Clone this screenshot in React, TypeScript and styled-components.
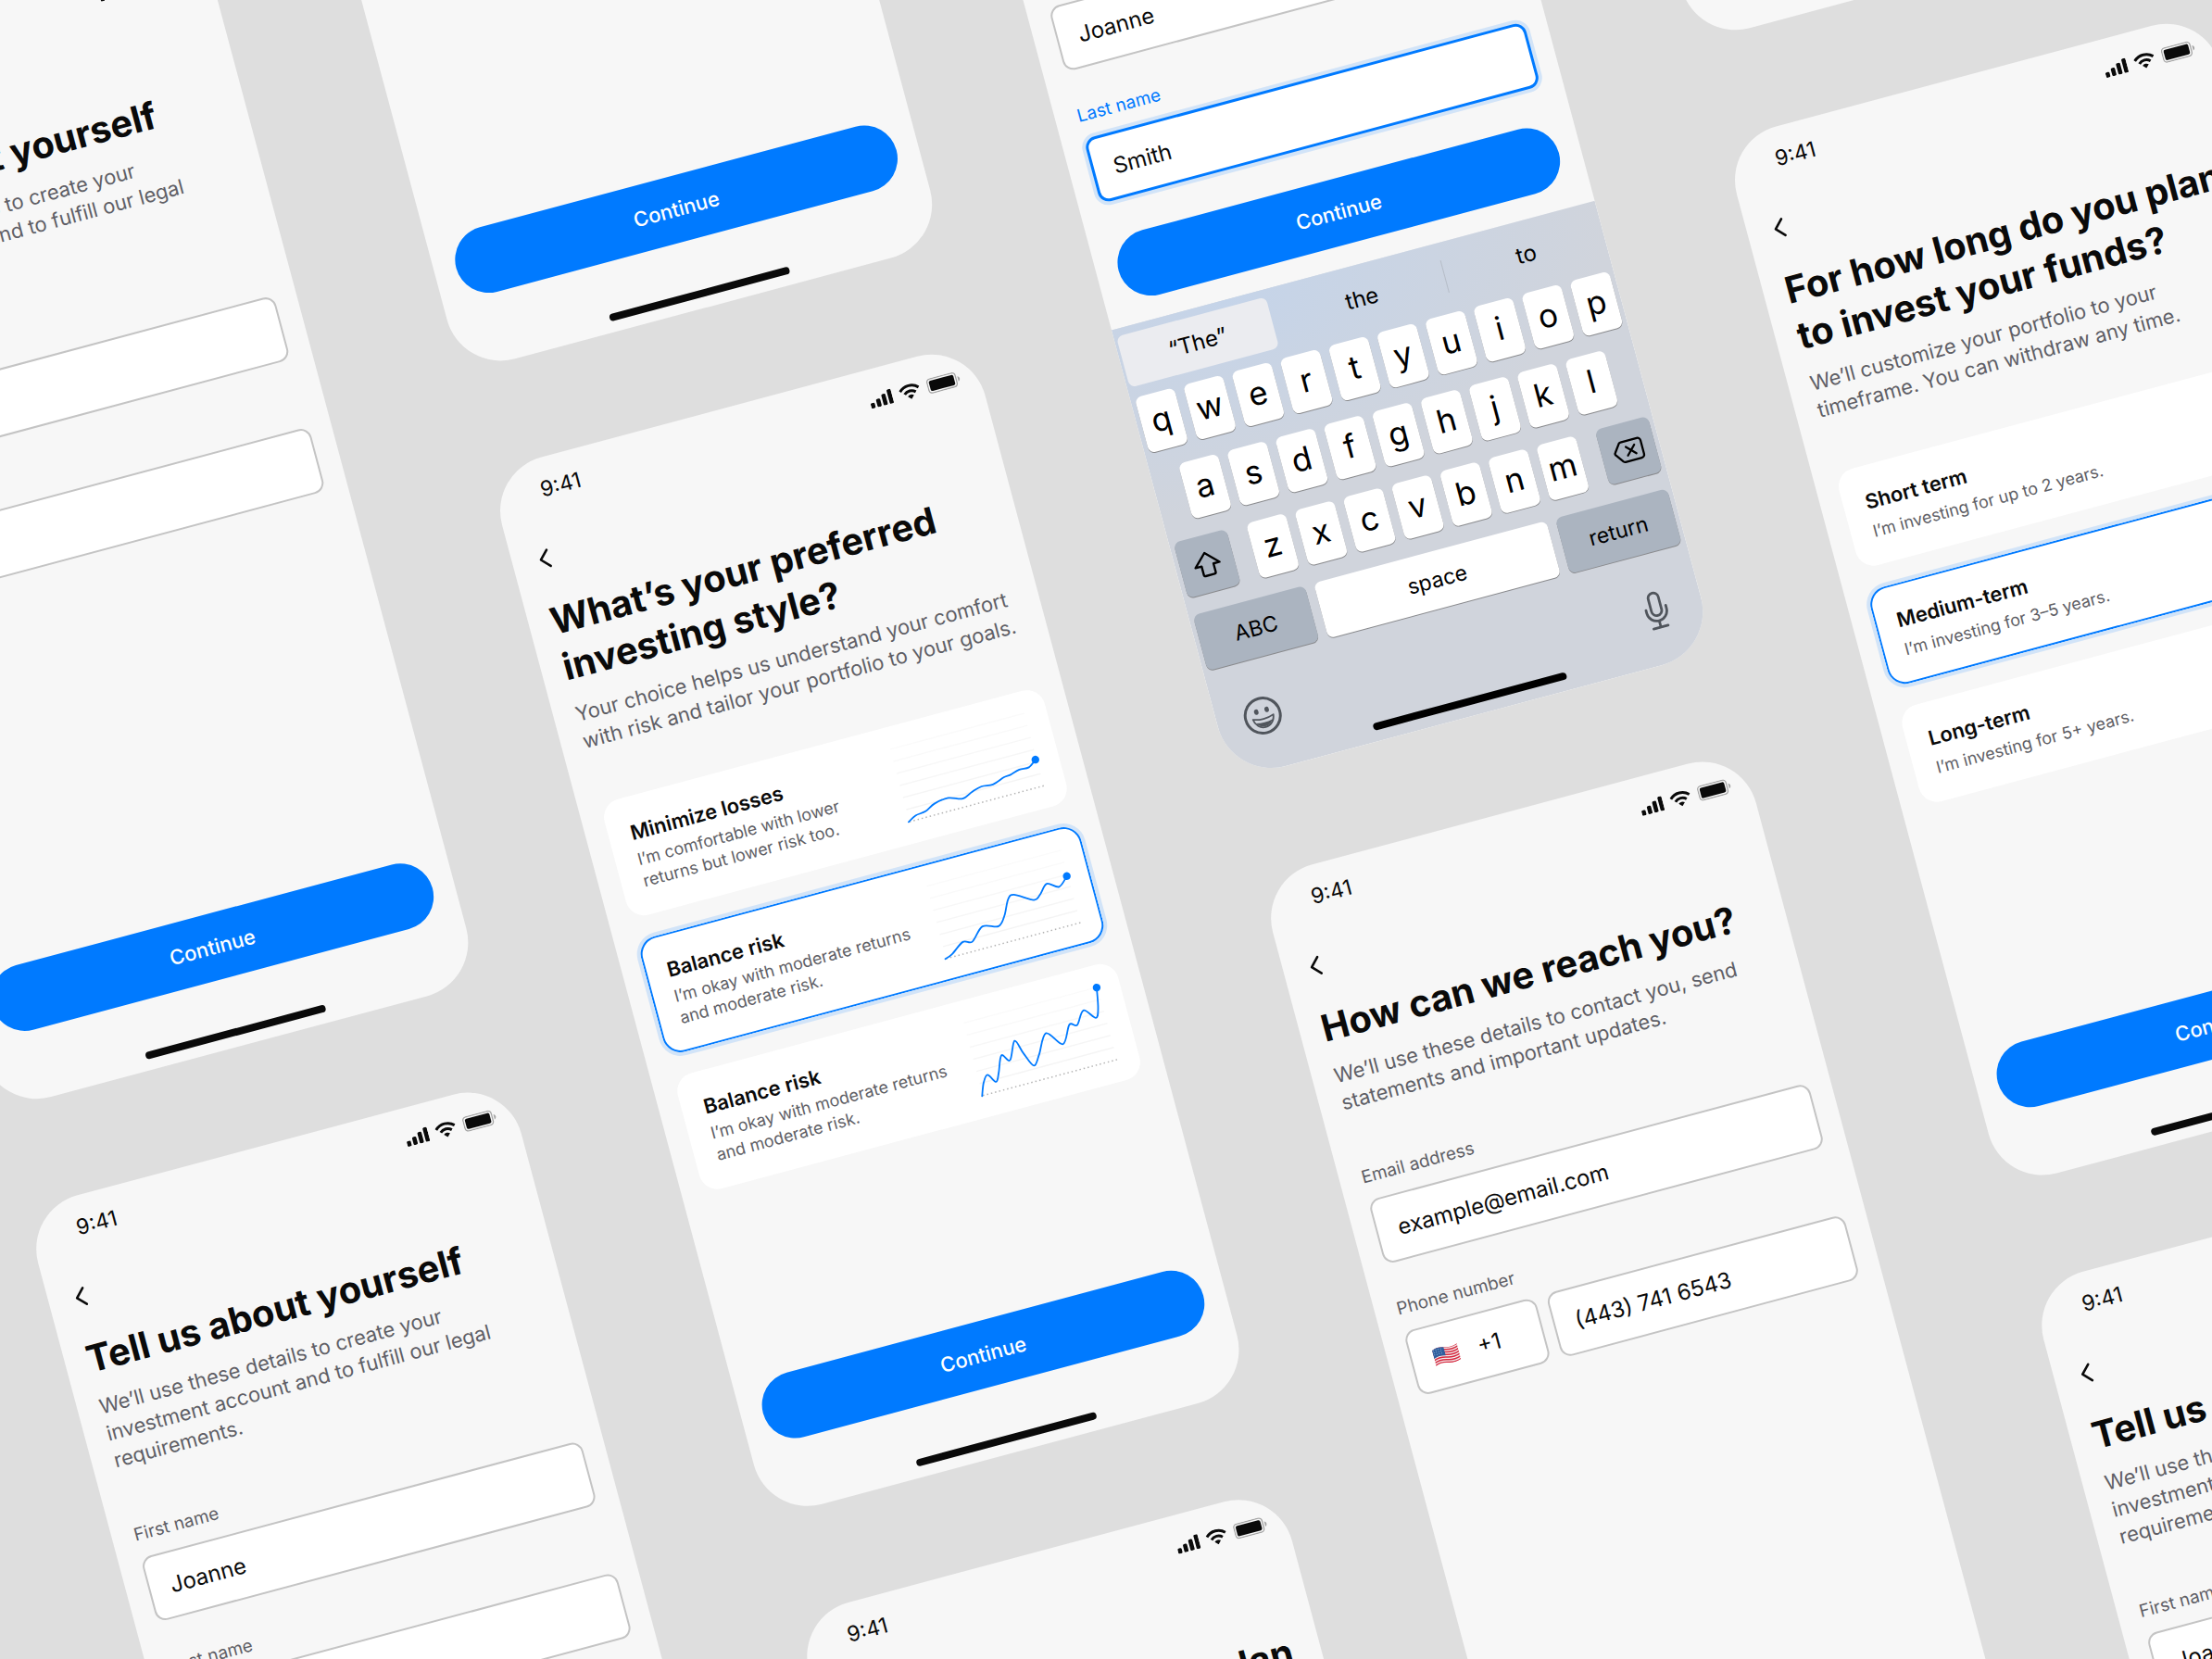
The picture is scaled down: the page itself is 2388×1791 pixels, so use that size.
import React, { useId } from "react";
import styled, { createGlobalStyle, css } from "styled-components";

const color = {
  canvas: "#dedede",
  screen: "#f7f7f7",
  card: "#ffffff",
  ink: "#0a0a0a",
  muted: "#5f5f66",
  line: "#c4c4c4",
  blue: "#007aff",
  halo: "rgba(0, 122, 255, 0.15)",
  keyboard: "#d0d4dc",
  keyDark: "#abb4c0",
  keyIcon: "#50555c",
};

const GlobalStyle = createGlobalStyle`
  * { box-sizing: border-box; }
  body { margin: 0; background: ${color.canvas}; }
  body, button, input {
    font-family: Inter, "Liberation Sans", sans-serif;
    color: ${color.ink};
  }
  button, input { margin: 0; padding: 0; border: 0; background: none; }
`;

/* ---------- canvas ---------- */

const Stage = styled.main`
  position: relative;
  width: 100%;
  height: 100vh;
  overflow: hidden;
  background: ${color.canvas};
`;

const Board = styled.div`
  position: absolute;
  left: calc(50% + 78px);
  top: calc(50% + 19px);
  display: flex;
  align-items: flex-start;
  gap: 150px;
  transform: translate(-50%, -50%) rotate(-15deg);
`;

const Column = styled.div<{ $lowered?: boolean }>`
  display: flex;
  flex-direction: column;
  gap: 110px;
  padding-top: ${(p) => (p.$lowered ? 640 : 0)}px;
`;

/* ---------- phone ---------- */

const Phone = styled.section`
  display: flex;
  flex-direction: column;
  width: 540px;
  height: 1170px;
  border-radius: 60px;
  overflow: hidden;
  background: ${color.screen};
`;

const StatusBar = styled.div`
  display: flex;
  align-items: center;
  justify-content: space-between;
  flex: none;
  height: 66px;
  padding: 2px 21px 0 50px;
  font-size: 23px;
  line-height: 30px;
`;

const StatusIcons = styled.div`
  display: flex;
  align-items: center;
  gap: 8px;
`;

const NavBar = styled.div`
  display: flex;
  align-items: center;
  flex: none;
  height: 83px;
  padding: 0 23px 2px;
`;

const BackButton = styled.button`
  display: flex;
  width: 24px;
  height: 24px;
`;

const Content = styled.div`
  display: flex;
  flex-direction: column;
  gap: 55px;
  padding: 0 24px;
`;

const Intro = styled.header`
  display: flex;
  flex-direction: column;
  gap: 12px;
`;

const Title = styled.h1`
  margin: 0;
  font-size: 40px;
  line-height: 51px;
  font-weight: 700;
  white-space: nowrap;
`;

const Subtitle = styled.p`
  margin: 0;
  font-size: 22px;
  line-height: 30px;
  color: ${color.muted};
  white-space: nowrap;
`;

const Footer = styled.div`
  display: flex;
  flex-direction: column;
  margin-top: auto;
  padding: 0 24px 24px;
`;

const PrimaryButton = styled.button`
  height: 72px;
  border-radius: 36px;
  background: ${color.blue};
  color: #ffffff;
  font-size: 22px;
  line-height: 30px;
  font-weight: 500;
`;

const HomeArea = styled.div<{ $short?: boolean }>`
  display: flex;
  align-items: flex-end;
  justify-content: center;
  flex: none;
  height: ${(p) => (p.$short ? 38 : 51)}px;
  padding-bottom: 12px;
`;

const HomeIndicator = styled.div<{ $wide?: boolean }>`
  width: ${(p) => (p.$wide ? 216 : 201)}px;
  height: 8px;
  border-radius: 4px;
  background: ${(p) => (p.$wide ? "#000000" : color.ink)};
`;

/* ---------- forms ---------- */

const Form = styled.form`
  display: flex;
  flex-direction: column;
  gap: 36px;
`;

const FieldBox = styled.div`
  display: flex;
  flex-direction: column;
  gap: 12px;
`;

const FieldLabel = styled.label<{ $active?: boolean }>`
  font-size: 19px;
  line-height: 27px;
  color: ${(p) => (p.$active ? color.blue : color.muted)};
`;

const fieldFrame = css`
  height: 72px;
  border: 2px solid ${color.line};
  border-radius: 12px;
  background: ${color.card};
  font-size: 24px;
  line-height: 30px;
`;

const TextInput = styled.input<{ $active?: boolean }>`
  ${fieldFrame}
  flex: 1 1 auto;
  width: 100%;
  min-width: 0;
  padding: 0 22px;
  outline: none;
  ${(p) =>
    p.$active &&
    css`
      padding: 0 21px;
      border: 3px solid ${color.blue};
      box-shadow: 0 0 0 4px ${color.halo};
    `}
`;

const PhoneRow = styled.div`
  display: flex;
  gap: 12px;
`;

const CountryButton = styled.button`
  ${fieldFrame}
  display: flex;
  align-items: center;
  gap: 20px;
  flex: none;
  width: 147px;
  padding: 0 22px;
`;

/* ---------- option cards ---------- */

const Options = styled.div`
  display: flex;
  flex-direction: column;
  gap: 24px;
`;

const OptionCard = styled.label<{ $selected?: boolean }>`
  position: relative;
  display: flex;
  justify-content: space-between;
  padding: 24px;
  border-radius: 20px;
  background: ${color.card};
  ${(p) =>
    p.$selected &&
    css`
      box-shadow: inset 0 0 0 2px ${color.blue}, 0 0 0 4px ${color.halo};
    `}
`;

const OptionRadio = styled.input`
  position: absolute;
  inset: 0;
  appearance: none;
  border-radius: 20px;
`;

const OptionText = styled.span<{ $loose?: boolean }>`
  display: flex;
  flex-direction: column;
  gap: ${(p) => (p.$loose ? 6 : 3)}px;
`;

const OptionTitle = styled.span`
  font-size: 22px;
  line-height: 30px;
  font-weight: 600;
`;

const OptionNote = styled.span`
  font-size: 18px;
  line-height: 24px;
  color: ${color.muted};
  white-space: pre-line;
`;

/* ---------- keyboard ---------- */

const Keyboard = styled.div`
  display: flex;
  flex-direction: column;
  flex: none;
  height: 503px;
  background:
    radial-gradient(ellipse 420px 220px at 24% 0, #c5d4e9 0, rgba(197, 212, 233, 0) 100%),
    ${color.keyboard};
`;

const Suggestions = styled.div`
  display: grid;
  grid-template-columns: 178px 184px 178px;
  align-items: center;
  flex: none;
  height: 77px;
  padding-bottom: 4px;
`;

const Suggestion = styled.button<{ $raised?: boolean; $ruled?: boolean }>`
  height: ${(p) => (p.$raised ? 57 : 36)}px;
  margin: 0 ${(p) => (p.$raised ? 8 : 0)}px 0 ${(p) => (p.$raised ? 3 : 0)}px;
  padding-left: ${(p) => (p.$ruled ? 4 : 0)}px;
  border-left: ${(p) => (p.$ruled ? "1px solid #b6bdc8" : "0")};
  border-radius: ${(p) => (p.$raised ? 7 : 0)}px;
  background: ${(p) => (p.$raised ? "#ebecf0" : "none")};
  font-size: 24px;
  line-height: 30px;
  color: #000000;
`;

const KeyRows = styled.div`
  display: flex;
  flex-direction: column;
  gap: 19px;
  padding: 0 5px;
`;

const KeyRow = styled.div<{ $spread?: boolean }>`
  display: flex;
  justify-content: ${(p) => (p.$spread ? "space-between" : "center")};
  gap: 10px;
`;

const KeyGroup = styled.div`
  display: flex;
  gap: 10px;
`;

const Key = styled.button<{ $width?: number; $dark?: boolean; $word?: boolean }>`
  display: flex;
  align-items: center;
  justify-content: center;
  width: ${(p) => p.$width ?? 44}px;
  height: 62px;
  padding-bottom: ${(p) => (p.$word || p.$dark ? 0 : 5)}px;
  border-radius: 7px;
  background: ${(p) => (p.$dark ? color.keyDark : "#ffffff")};
  box-shadow: 0 1px 0 #898a8d;
  font-size: ${(p) => (p.$word ? 23 : 35)}px;
  line-height: 40px;
  color: #000000;
`;

const KeyboardTools = styled.div`
  display: flex;
  align-items: center;
  justify-content: space-between;
  margin-top: auto;
  padding: 0 28px;
`;

const ToolButton = styled.button`
  display: flex;
  justify-content: center;
  width: 44px;
`;

/* ---------- drawings ---------- */

const SignalIcon = () => (
  <svg width="25" height="16" viewBox="0 0 25 16" fill={color.ink} aria-hidden="true">
    <rect x="0" y="10" width="4.6" height="6" rx="1.5" />
    <rect x="6.8" y="7" width="4.6" height="9" rx="1.5" />
    <rect x="13.6" y="3.5" width="4.6" height="12.5" rx="1.5" />
    <rect x="20.4" y="0" width="4.6" height="16" rx="1.5" />
  </svg>
);

const WifiIcon = () => (
  <svg width="23" height="17" viewBox="0 0 23 17" fill="none" stroke={color.ink} strokeWidth="3" aria-hidden="true">
    <path d="M1.2 6.2a14.6 14.6 0 0 1 20.6 0" />
    <path d="M5.3 10.3a8.8 8.8 0 0 1 12.4 0" />
    <path d="M11.5 16.8 8.1 13.3a4.9 4.9 0 0 1 6.8 0Z" fill={color.ink} stroke="none" />
  </svg>
);

const BatteryIcon = () => (
  <svg width="37" height="17" viewBox="0 0 37 17" fill="none" aria-hidden="true">
    <rect x="0.75" y="0.75" width="31.5" height="15.5" rx="3.6" stroke="#a4a4a4" strokeWidth="1.3" />
    <rect x="2.8" y="2.8" width="27.4" height="11.4" rx="2" fill={color.ink} />
    <path d="M34.2 5.8v5.6c1.2-.4 2-1.5 2-2.8s-.8-2.4-2-2.8Z" fill="#a4a4a4" />
  </svg>
);

const ChevronIcon = () => (
  <svg width="24" height="24" viewBox="0 0 24 24" fill="none" stroke={color.ink} strokeWidth="2.6" strokeLinecap="round" strokeLinejoin="round" aria-hidden="true">
    <path d="M16.4 3 7.8 12l8.6 9" />
  </svg>
);

const FlagIcon = () => (
  <svg width="30" height="22" viewBox="0 0 30 22" aria-hidden="true">
    <clipPath id="flag-wave">
      <path d="M1 2.6C6 .2 10 .6 15 2.2s9 1.6 14-.4v17.4c-5 2-9 2-14 .4S6 17.6 1 20Z" />
    </clipPath>
    <g clipPath="url(#flag-wave)">
      <rect width="30" height="22" fill="#f1efef" />
      {[0, 1, 2, 3, 4, 5, 6].map((i) => (
        <path
          key={i}
          d={`M0 ${i * 2.86 + 2.4}C6 ${i * 2.86 - 0.2} 10 ${i * 2.86 + 0.4} 15 ${i * 2.86 + 2}s9 1.6 15 -.6`}
          fill="none"
          stroke="#d8283f"
          strokeWidth="1.5"
        />
      ))}
      <path d="M0 1.5C5 0 9 .2 14 1.9v9.4C9 9.6 5 9.8 0 12Z" fill="#2f5f9e" />
      {[3, 5.4, 7.8].map((y) =>
        [2.6, 5.2, 7.8, 10.4].map((x) => <circle key={`${x}-${y}`} cx={x} cy={y} r="0.5" fill="#a9c4e6" />),
      )}
    </g>
  </svg>
);

const ShiftIcon = () => (
  <svg width="31" height="29" viewBox="0 0 30 28" fill="none" stroke="#000000" strokeWidth="2.3" strokeLinejoin="round" aria-hidden="true">
    <path d="M15 2 2 15h6.6v9.2a1.6 1.6 0 0 0 1.6 1.6h9.6a1.6 1.6 0 0 0 1.6-1.6V15H28Z" />
  </svg>
);

const DeleteIcon = () => (
  <svg width="34" height="26" viewBox="0 0 34 26" fill="none" stroke="#000000" strokeWidth="2.3" strokeLinecap="round" strokeLinejoin="round" aria-hidden="true">
    <path d="M10.4 2h18a3.4 3.4 0 0 1 3.4 3.4v15.2a3.4 3.4 0 0 1-3.4 3.4h-18a3 3 0 0 1-2.2-1L2 14.4a2.1 2.1 0 0 1 0-2.8L8.2 3a3 3 0 0 1 2.2-1Z" />
    <path d="m14.6 8.2 9.4 9.6M24 8.2l-9.4 9.6" />
  </svg>
);

const EmojiIcon = () => (
  <svg width="42" height="42" viewBox="0 0 42 42" fill="none" stroke={color.keyIcon} strokeWidth="3" aria-hidden="true">
    <circle cx="21" cy="21" r="19" />
    <ellipse cx="15.2" cy="15.6" rx="2.4" ry="3" fill={color.keyIcon} stroke="none" />
    <ellipse cx="26.8" cy="15.6" rx="2.4" ry="3" fill={color.keyIcon} stroke="none" />
    <path d="M9.6 22.6c3.4 1.4 7.2 2 11.4 2s8-.6 11.4-2c-.6 6.4-5.4 11.2-11.4 11.2S10.2 29 9.6 22.6Z" strokeWidth="1.8" strokeLinejoin="round" />
    <path d="M12.2 27.4c5.6 1.4 12 1.4 17.6 0-1.6 3.4-4.8 5.6-8.8 5.6s-7.2-2.2-8.8-5.6Z" fill={color.keyIcon} stroke="none" />
  </svg>
);

const MicIcon = () => (
  <svg width="28" height="42" viewBox="0 0 28 42" fill="none" stroke={color.keyIcon} strokeWidth="2.8" strokeLinecap="round" aria-hidden="true">
    <rect x="8.4" y="2" width="11.2" height="25" rx="5.6" />
    <path d="M3 18.5v3.3a11 11 0 0 0 22 0v-3.3M14 32.8V40M6 40h16" />
  </svg>
);

type Point = [number, number];

/* Catmull-Rom spline through the points, written as cubic segments. */
const smooth = (points: Point[]) =>
  points.slice(1).reduce((d, p, i) => {
    const a = points[i];
    const before = points[i - 1] ?? a;
    const after = points[i + 2] ?? p;
    const c1 = [a[0] + (p[0] - before[0]) / 6, a[1] + (p[1] - before[1]) / 6];
    const c2 = [p[0] - (after[0] - a[0]) / 6, p[1] - (after[1] - a[1]) / 6];
    return `${d} C${c1.join(" ")} ${c2.join(" ")} ${p.join(" ")}`;
  }, `M${points[0].join(" ")}`);

const ChartSvg = styled.svg`
  display: block;
  flex: none;
  overflow: visible;
`;

const Chart = ({ points }: { points: Point[] }) => {
  const end = points[points.length - 1];
  return (
    <ChartSvg width="150" height="81" viewBox="0 0 150 81" fill="none" aria-hidden="true">
      {[0, 1, 2, 3, 4, 5].map((i) => (
        <path key={i} d={`M0 ${i * 13.5}H150`} stroke={`rgba(0, 0, 0, ${0.02 + i * 0.005})`} strokeWidth="1.5" />
      ))}
      <path d="M0 81H150" stroke="#b4b4b4" strokeWidth="1.5" strokeDasharray="1.5 3" />
      <path d={smooth(points)} stroke={color.blue} strokeWidth="1.8" strokeLinecap="round" strokeLinejoin="round" />
      <circle cx={end[0]} cy={end[1]} r="4.2" fill={color.blue} />
    </ChartSvg>
  );
};

/* ---------- data ---------- */

const steady: Point[] = [
  [-1, 81], [8, 76.2], [19.7, 74.6], [31, 69.1], [47, 67], [61.9, 71.8], [73.8, 67.2], [85, 64.3],
  [97.4, 65.4], [111, 61], [118, 60.3], [129, 57.4], [139.7, 57.6], [148.6, 51.4],
];

const balanced: Point[] = [
  [-1, 81], [7, 78.2], [22, 68.2], [32, 70.6], [46.8, 57.5], [63.7, 61.8], [72.7, 52.5], [81, 36.6],
  [88.4, 33.2], [107.8, 44.3], [116, 40.2], [125.7, 31], [137.8, 37.6], [148.8, 28.6],
];

const bold: Point[] = [
  [-1, 81.5], [4.3, 67.9], [10.6, 60.8], [17.6, 70.4], [22.8, 61.8], [30.5, 44.3], [38.2, 51.7], [48.3, 32.8],
  [54, 48], [61.5, 64.1], [70, 54.1], [83.2, 33.6], [97.9, 49.8], [110, 31.2], [118, 33.8], [128.6, 20.3],
  [139.5, 31.5], [144.5, 22.3], [148.8, 0.2],
];

type Option = { title: string; note: string; chart?: Point[] };

const styleOptions: Option[] = [
  { title: "Minimize losses", note: "I’m comfortable with lower\nreturns but lower risk too.", chart: steady },
  { title: "Balance risk", note: "I’m okay with moderate returns\nand moderate risk.", chart: balanced },
  { title: "Balance risk", note: "I’m okay with moderate returns\nand moderate risk.", chart: bold },
];

const termOptions: Option[] = [
  { title: "Short term", note: "I’m investing for up to 2 years." },
  { title: "Medium-term", note: "I’m investing for 3–5 years." },
  { title: "Long-term", note: "I’m investing for 5+ years." },
];

/* ---------- shared parts ---------- */

const Status = () => (
  <StatusBar>
    <span>9:41</span>
    <StatusIcons>
      <SignalIcon />
      <WifiIcon />
      <BatteryIcon />
    </StatusIcons>
  </StatusBar>
);

const Nav = () => (
  <NavBar>
    <BackButton type="button" aria-label="Back">
      <ChevronIcon />
    </BackButton>
  </NavBar>
);

const Lines = ({ text }: { text: string[] }) => (
  <>
    {text.map((line, i) => (
      <React.Fragment key={line}>
        {i > 0 && <br />}
        {line}
      </React.Fragment>
    ))}
  </>
);

const Heading = ({ title, lead }: { title: string[]; lead: string[] }) => (
  <Intro>
    <Title>
      <Lines text={title} />
    </Title>
    <Subtitle>
      <Lines text={lead} />
    </Subtitle>
  </Intro>
);

const Home = () => (
  <HomeArea>
    <HomeIndicator />
  </HomeArea>
);

const ContinueBar = () => (
  <Footer>
    <PrimaryButton type="button">Continue</PrimaryButton>
  </Footer>
);

const Field = ({ label, value, type = "text", active }: { label: string; value: string; type?: string; active?: boolean }) => {
  const id = useId();
  return (
    <FieldBox>
      <FieldLabel htmlFor={id} $active={active}>
        {label}
      </FieldLabel>
      <TextInput id={id} type={type} defaultValue={value} $active={active} />
    </FieldBox>
  );
};

const OptionList = ({ options }: { options: Option[] }) => {
  const name = useId();
  return (
    <Options>
      {options.map((option, i) => (
        <OptionCard key={i} $selected={i === 1}>
          <OptionRadio type="radio" name={name} defaultChecked={i === 1} />
          <OptionText $loose={!option.chart}>
            <OptionTitle>{option.title}</OptionTitle>
            <OptionNote>{option.note}</OptionNote>
          </OptionText>
          {option.chart && <Chart points={option.chart} />}
        </OptionCard>
      ))}
    </Options>
  );
};

/* ---------- screens ---------- */

const aboutHeading = {
  title: ["Tell us about yourself"],
  lead: ["We’ll use these details to create your", "investment account and to fulfill our legal", "requirements."],
};

const AboutScreen = () => (
  <Phone>
    <Status />
    <Nav />
    <Content>
      <Heading {...aboutHeading} />
      <Form>
        <Field label="First name" value="Joanne" />
        <Field label="Last name" value="Smith" />
      </Form>
    </Content>
    <ContinueBar />
    <Home />
  </Phone>
);

const letters = (row: string) =>
  [...row].map((letter) => (
    <Key key={letter} type="button">
      {letter}
    </Key>
  ));

const TypingScreen = () => (
  <Phone>
    <Status />
    <Content>
      <Heading {...aboutHeading} />
      <Form>
        <Field label="First name" value="Joanne" />
        <Field label="Last name" value="Smith" active />
      </Form>
    </Content>
    <ContinueBar />
    <Keyboard>
      <Suggestions>
        <Suggestion type="button" $raised>“The”</Suggestion>
        <Suggestion type="button">the</Suggestion>
        <Suggestion type="button" $ruled>to</Suggestion>
      </Suggestions>
      <KeyRows>
        <KeyRow>{letters("qwertyuiop")}</KeyRow>
        <KeyRow>{letters("asdfghjkl")}</KeyRow>
        <KeyRow $spread>
          <Key type="button" $width={59} $dark aria-label="Shift">
            <ShiftIcon />
          </Key>
          <KeyGroup>{letters("zxcvbnm")}</KeyGroup>
          <Key type="button" $width={59} $dark aria-label="Delete">
            <DeleteIcon />
          </Key>
        </KeyRow>
        <KeyRow>
          <Key type="button" $width={125} $dark $word>ABC</Key>
          <Key type="button" $width={260} $word>space</Key>
          <Key type="button" $width={125} $dark $word>return</Key>
        </KeyRow>
      </KeyRows>
      <KeyboardTools>
        <ToolButton type="button" aria-label="Emoji">
          <EmojiIcon />
        </ToolButton>
        <ToolButton type="button" aria-label="Dictate">
          <MicIcon />
        </ToolButton>
      </KeyboardTools>
      <HomeArea $short>
        <HomeIndicator $wide />
      </HomeArea>
    </Keyboard>
  </Phone>
);

const ContactScreen = () => {
  const phoneId = useId();
  return (
    <Phone>
      <Status />
      <Nav />
      <Content>
        <Heading
          title={["How can we reach you?"]}
          lead={["We’ll use these details to contact you, send", "statements and important updates."]}
        />
        <Form>
          <Field label="Email address" type="email" value="example@email.com" />
          <FieldBox>
            <FieldLabel htmlFor={phoneId}>Phone number</FieldLabel>
            <PhoneRow>
              <CountryButton type="button" aria-label="Country code +1">
                <FlagIcon />
                <span>+1</span>
              </CountryButton>
              <TextInput id={phoneId} type="tel" defaultValue="(443) 741 6543" />
            </PhoneRow>
          </FieldBox>
        </Form>
      </Content>
      <ContinueBar />
      <Home />
    </Phone>
  );
};

const StyleScreen = () => (
  <Phone>
    <Status />
    <Nav />
    <Content>
      <Heading
        title={["What’s your preferred", "investing style?"]}
        lead={["Your choice helps us understand your comfort", "with risk and tailor your portfolio to your goals."]}
      />
      <OptionList options={styleOptions} />
    </Content>
    <ContinueBar />
    <Home />
  </Phone>
);

const TermScreen = () => (
  <Phone>
    <Status />
    <Nav />
    <Content>
      <Heading
        title={["For how long do you plan", "to invest your funds?"]}
        lead={["We’ll customize your portfolio to your", "timeframe. You can withdraw any time."]}
      />
      <OptionList options={termOptions} />
    </Content>
    <ContinueBar />
    <Home />
  </Phone>
);

export default function App() {
  return (
    <>
      <GlobalStyle />
      <Stage>
        <Board>
          <Column $lowered>
            <AboutScreen />
            <AboutScreen />
          </Column>
          <Column>
            <ContactScreen />
            <StyleScreen />
            <TermScreen />
          </Column>
          <Column $lowered>
            <TypingScreen />
            <ContactScreen />
          </Column>
          <Column>
            <ContactScreen />
            <TermScreen />
            <AboutScreen />
          </Column>
        </Board>
      </Stage>
    </>
  );
}
